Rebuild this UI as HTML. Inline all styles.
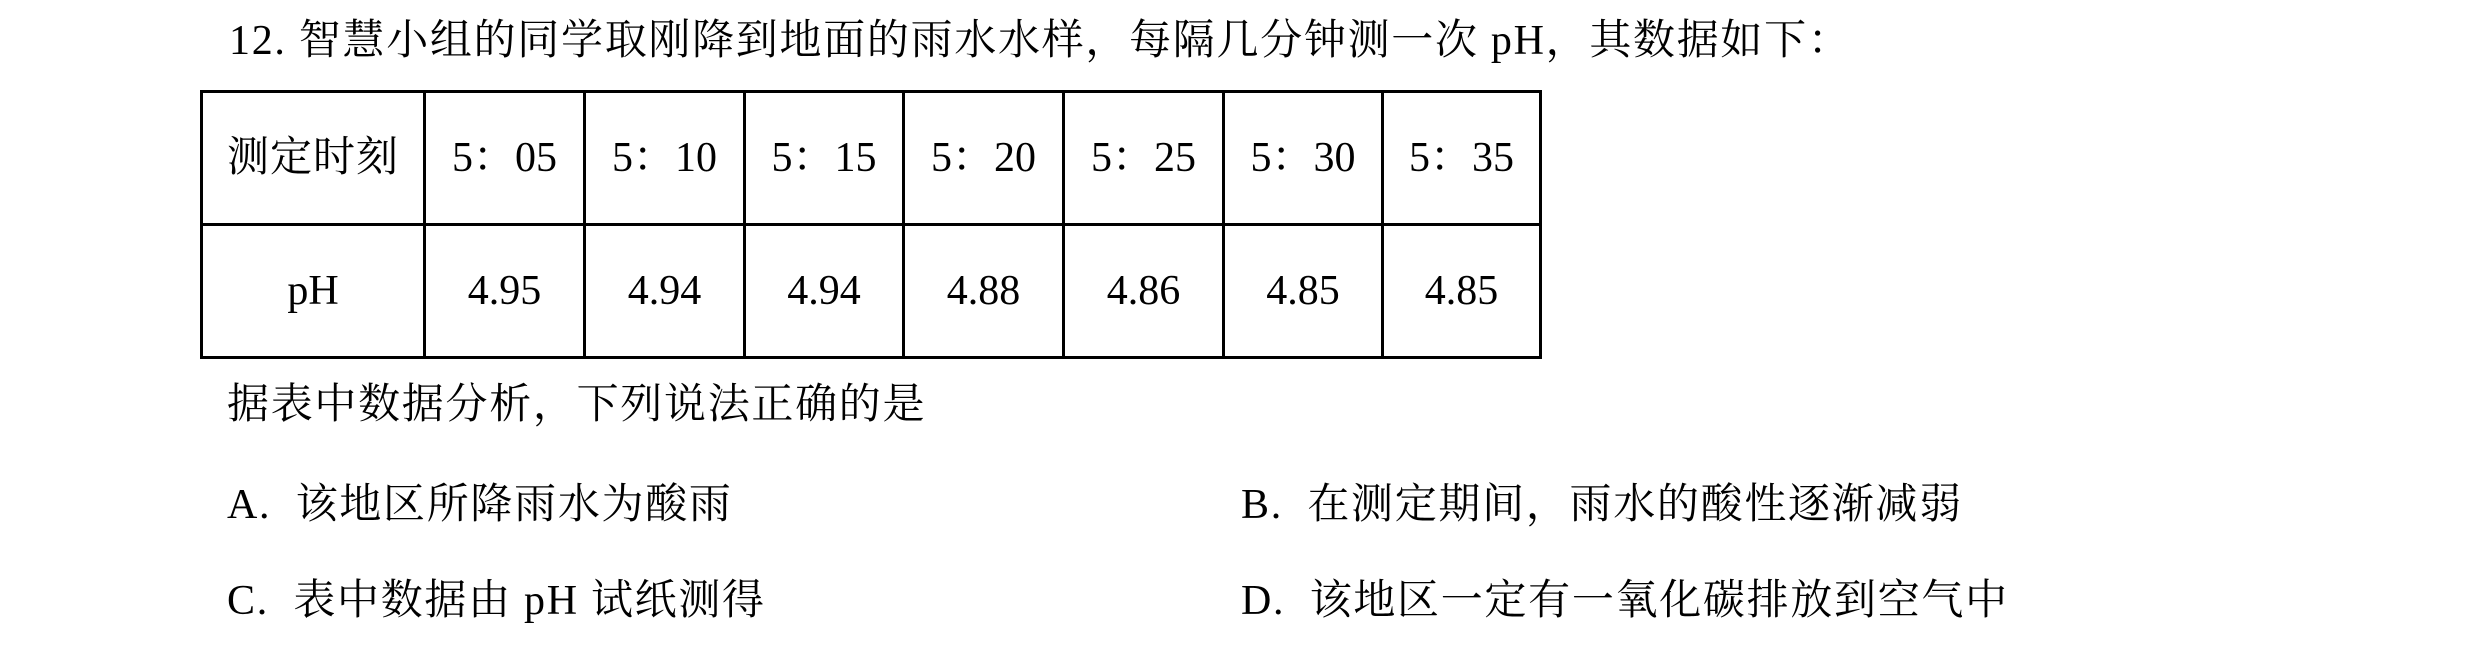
<!DOCTYPE html>
<html><head><meta charset="utf-8"><style>
html,body{margin:0;padding:0;background:#fff;}
body{width:2480px;height:645px;position:relative;overflow:hidden;font-family:"Liberation Serif","Noto Serif CJK SC",serif;color:#000;font-size:42px;}
.l{position:absolute;white-space:nowrap;line-height:42px;letter-spacing:1.7px;}
.h{position:absolute;background:#000;height:3px;left:200px;width:1342px;}
.v{position:absolute;background:#000;width:3px;top:91px;height:268px;}
.c{position:absolute;display:flex;align-items:center;justify-content:center;height:132px;line-height:42px;}
</style></head><body>
<div class="l" style="left:229px;top:20px;">12. 智慧小组的同学取刚降到地面的雨水水样，每隔几分钟测一次 pH，其数据如下：</div>

<div class="h" style="top:90px;"></div>
<div class="h" style="top:223px;"></div>
<div class="h" style="top:356px;"></div>
<div class="v" style="left:200px;"></div>
<div class="v" style="left:423px;"></div>
<div class="v" style="left:583px;"></div>
<div class="v" style="left:743px;"></div>
<div class="v" style="left:902px;"></div>
<div class="v" style="left:1062px;"></div>
<div class="v" style="left:1222px;"></div>
<div class="v" style="left:1381px;"></div>
<div class="v" style="left:1539px;"></div>

<div class="c" style="left:203px;width:220px;top:92px;letter-spacing:1px;">测定时刻</div>
<div class="c" style="left:426px;width:157px;top:92px;">5：05</div>
<div class="c" style="left:586px;width:157px;top:92px;">5：10</div>
<div class="c" style="left:746px;width:156px;top:92px;">5：15</div>
<div class="c" style="left:905px;width:157px;top:92px;">5：20</div>
<div class="c" style="left:1065px;width:157px;top:92px;">5：25</div>
<div class="c" style="left:1225px;width:156px;top:92px;">5：30</div>
<div class="c" style="left:1384px;width:155px;top:92px;">5：35</div>

<div class="c" style="left:203px;width:220px;top:225px;">pH</div>
<div class="c" style="left:426px;width:157px;top:225px;">4.95</div>
<div class="c" style="left:586px;width:157px;top:225px;">4.94</div>
<div class="c" style="left:746px;width:156px;top:225px;">4.94</div>
<div class="c" style="left:905px;width:157px;top:225px;">4.88</div>
<div class="c" style="left:1065px;width:157px;top:225px;">4.86</div>
<div class="c" style="left:1225px;width:156px;top:225px;">4.85</div>
<div class="c" style="left:1384px;width:155px;top:225px;">4.85</div>

<div class="l" style="left:227px;top:384px;">据表中数据分析，下列说法正确的是</div>
<div class="l" style="left:227px;top:484px;">A.&nbsp; 该地区所降雨水为酸雨</div>
<div class="l" style="left:1241px;top:484px;">B.&nbsp; 在测定期间，雨水的酸性逐渐减弱</div>
<div class="l" style="left:227px;top:580px;">C.&nbsp; 表中数据由 pH 试纸测得</div>
<div class="l" style="left:1241px;top:580px;">D.&nbsp; 该地区一定有一氧化碳排放到空气中</div>
</body></html>
